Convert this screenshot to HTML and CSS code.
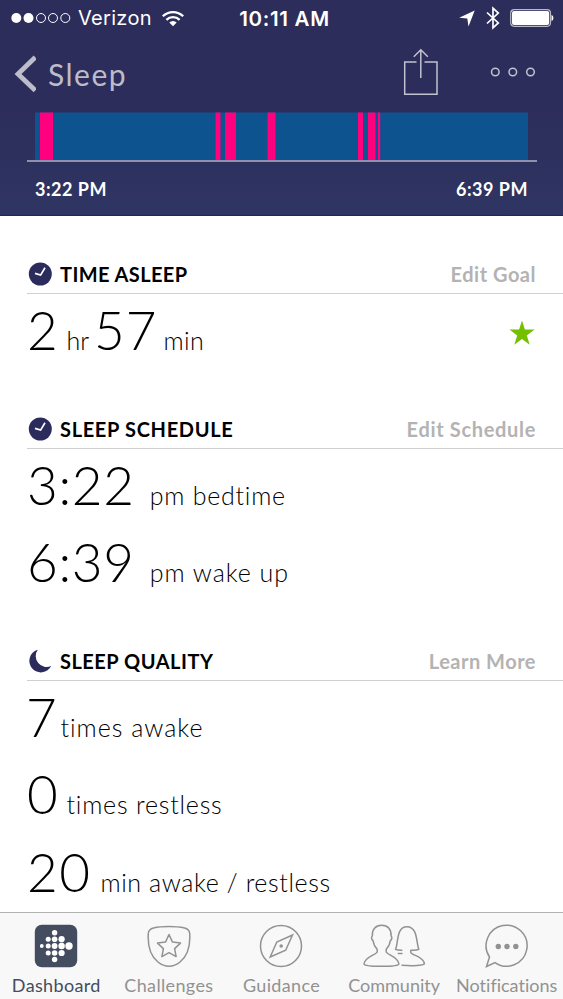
FILE: index.html
```html
<!DOCTYPE html>
<html lang="en">
<head>
<meta charset="utf-8">
<title>Sleep</title>
<link rel="stylesheet" href="styles.css">
</head>
<body>
<div class="app">
  <header class="top">
    <div class="status">
      <div class="carrier">
        <svg width="60" height="12" viewBox="0 0 60 12"><g fill="#fff"><circle cx="5.3" cy="6" r="5"/><circle cx="17.5" cy="6" r="5"/></g><g fill="none" stroke="#fff"><circle cx="30" cy="6" r="4.5"/><circle cx="42" cy="6" r="4.5"/><circle cx="54.3" cy="6" r="4.5"/></g></svg>
        <span class="name">Verizon</span>
        <svg width="22" height="17" viewBox="0 0 22 17"><g fill="none" stroke="#fff" stroke-width="2.3"><path d="M.8 6.3a14.5 14.5 0 0 1 20.4 0"/><path d="M4.4 9.9a9.4 9.4 0 0 1 13.2 0"/></g><path d="M11 16.3 7.3 12.6a5.2 5.2 0 0 1 7.4 0z" fill="#fff"/></svg>
      </div>
      <span class="clock">10:11 AM</span>
      <div class="radios">
        <svg width="16" height="17" viewBox="0 0 16 17"><path d="M15.7.5 9.5 16.5 8.3 8.5.2 7.7z" fill="#fff"/></svg>
        <svg width="14" height="24" viewBox="0 0 14 24"><path d="M1 6.5 12.3 17 7 21.8V2.2L12.3 7 1 17.5" fill="none" stroke="#fff" stroke-width="1.7"/></svg>
        <svg width="44" height="18" viewBox="0 0 44 18"><rect x=".7" y=".7" width="39.8" height="16.6" rx="3.5" fill="none" stroke="#b9b9ca" stroke-width="1.2"/><rect x="2" y="2" width="37.2" height="14" rx="2" fill="#fff"/><path d="M41.5 6c2.5.5 2.5 5.5 0 6z" fill="#fff"/></svg>
      </div>
    </div>
    <nav class="nav">
      <div class="back">
        <svg width="23" height="38" viewBox="0 0 23 38"><path d="M22.3 2.3 5 19 22.3 35.5" fill="none" stroke="#bcbccb" stroke-width="4.8"/></svg>
        <span class="title">Sleep</span>
      </div>
      <div class="actions">
        <svg width="36" height="48" viewBox="0 0 36 48"><path d="M13.5 14H1.7v32.3h32.3V14H21.5M17.8 30V2M10.8 8.800l7-7 7 7" fill="none" stroke="#c2c2d0" stroke-width="1.5"/></svg>
        <svg width="46" height="12" viewBox="0 0 46 12"><g fill="none" stroke="#c2c2d0" stroke-width="1.5"><circle cx="5.3" cy="6" r="3.8"/><circle cx="22.8" cy="6" r="3.8"/><circle cx="40.5" cy="6" r="3.8"/></g></svg>
      </div>
    </nav>
    <div class="chart">
      <svg width="493" height="48" viewBox="0 0 493 48"><path d="M0 .6h493V48H0z" fill="#0c538f"/><path d="M5 .6h13V48H5zM180.5.6h5V48h-5zM190 .6h11V48h-11zM232.5.6h8V48h-8zM323 .6h5V48h-5zM333 .6h7.500V48H333zM343 .6h2.200V48H343z" fill="#ff007f"/></svg>
    </div>
    <div class="range"><span>3:22 PM</span><span>6:39 PM</span></div>
  </header>

  <main>
    <section>
      <div class="head">
        <svg width="24" height="24" viewBox="0 0 24 24"><circle cx="12.3" cy="12" r="11.5" fill="#2c2c5c"/><path d="M7 11.4 12.6 13.1 17 5.8" fill="none" stroke="#fff" stroke-width="1.7"/></svg>
        <h2 class="h-time">TIME ASLEEP</h2><a class="l-goal">Edit Goal</a>
      </div>
      <div class="row"><b>2</b><span class="hr">hr</span><b class="n57">57</b><span class="min">min</span>
        <svg class="star" width="26" height="26" viewBox="0 0 26 26"><path d="m13 .5 2.900 9.100h9.700l-7.800 5.800 2.900 9.300L13 19l-7.700 5.700 2.900-9.300L.4 9.600h9.700z" fill="#73bf00"/></svg>
      </div>
    </section>
    <section>
      <div class="head">
        <svg width="24" height="24" viewBox="0 0 24 24"><circle cx="12.3" cy="12" r="11.5" fill="#2c2c5c"/><path d="M7 11.4 12.6 13.1 17 5.8" fill="none" stroke="#fff" stroke-width="1.7"/></svg>
        <h2 class="h-sched">SLEEP SCHEDULE</h2><a class="l-sched">Edit Schedule</a>
      </div>
      <div class="row"><b>3:22</b><span class="bed">pm bedtime</span></div>
      <div class="row"><b>6:39</b><span class="wake">pm wake up</span></div>
    </section>
    <section>
      <div class="head">
        <svg width="24" height="24" viewBox="0 0 24 24"><path d="M9.800.8A11.500 11.500 0 1 0 23.200 16.900 10.800 10.800 0 0 1 9.800.8z" fill="#2c2c5c"/></svg>
        <h2 class="h-qual">SLEEP QUALITY</h2><a class="l-more">Learn More</a>
      </div>
      <div class="row"><b class="n7">7</b><span class="awake">times awake</span></div>
      <div class="row"><b>0</b><span class="restless">times restless</span></div>
      <div class="row"><b class="n20">20</b><span class="both">min awake / restless</span></div>
    </section>
  </main>

  <footer class="tabs">
    <div class="tab on">
      <svg width="44" height="44" viewBox="0 0 44 44"><rect x=".8" y=".8" width="42.4" height="42.4" rx="7" fill="#434d5f"/><g fill="#fff"><circle cx="20.6" cy="8.7" r="2.7"/><circle cx="14.2" cy="15.2" r="2.5"/><circle cx="20.6" cy="15.2" r="2.8"/><circle cx="27.6" cy="15.2" r="3.1"/><circle cx="7.8" cy="22" r="1.9"/><circle cx="14.2" cy="22" r="2.5"/><circle cx="20.6" cy="22" r="2.9"/><circle cx="27.6" cy="22" r="3.2"/><circle cx="35" cy="22" r="3.7"/><circle cx="14.2" cy="29" r="2.5"/><circle cx="20.6" cy="29" r="2.8"/><circle cx="27.6" cy="29" r="3.1"/><circle cx="20.6" cy="35.5" r="2.7"/></g></svg>
      <span class="spaced">Dashboard</span>
    </div>
    <div class="tab">
      <svg width="44" height="44" viewBox="0 0 44 44"><g fill="none" stroke="#929292" stroke-width="1.5" stroke-linejoin="round"><path d="M22 2.500c6 0 11 .4 15.500 1.500 3 .7 5 2.700 5.200 5.500.8 12.500-2.200 22.500-9.700 28.500-3.500 3-7 4.300-11 4.300s-7.500-1.300-11-4.300C3.500 32 .5 22 1.300 9.500 1.500 6.700 3.500 4.700 6.500 4 11 2.900 16 2.500 22 2.500z"/><path d="m22 10.500 3.500 7.600 8 1-5.900 5.500 1.500 8-7.100-3.900-7.100 3.900 1.500-8-5.900-5.500 8-1z"/></g></svg>
      <span class="spaced">Challenges</span>
    </div>
    <div class="tab">
      <svg width="44" height="44" viewBox="0 0 44 44"><g fill="none" stroke="#929292" stroke-width="1.5"><circle cx="22" cy="22" r="20.5"/><path d="M33.5 11 17.8 18 11.2 33 26.7 26.3z"/></g><circle cx="22.2" cy="22" r="1.8" fill="#929292"/></svg>
      <span class="spaced">Guidance</span>
    </div>
    <div class="tab">
      <svg width="62" height="44" viewBox="0 0 62 44"><g fill="none" stroke="#929292" stroke-width="1.5" stroke-linejoin="round" stroke-linecap="round"><path d="M14.200 25.200C11.800 22.800 10.500 20 10 16.500c-1.800-.8-1.800-4-.6-4.700C8.800 5.500 12.500 1.200 18.700 1.200S28.600 5.500 28 11.800c1.200.7 1.200 3.900-.6 4.700-.5 3.500-1.800 6.300-4.200 8.700v2.800c1.500 3 11.700 4.800 12.700 11.800-.2 1.700-6 2.500-17.200 2.500S1.200 41.500 1 39.800c1-7 11.700-8.800 13.200-11.800z"/><path d="M39 29.500h-3.700M38.800 26.200c-2.200.1-4.400-.1-6.300-.8C35.500 19.500 33 2.700 44 2.700s9.200 16.800 11.800 22.700c-2 .9-5 1-8 .8v2.200c1 3 12.700 3.800 13.700 11.200-1.500 1.900-12 2.600-22.500 1.600"/></g></svg>
      <span>Community</span>
    </div>
    <div class="tab">
      <svg width="44" height="44" viewBox="0 0 44 44"><path d="M10 38.600A20.500 20.500 0 1 0 4.500 33L1.500 42.500z" fill="none" stroke="#929292" stroke-width="1.5"/><g fill="#929292"><circle cx="13.3" cy="22.5" r="2.7"/><circle cx="22" cy="22.5" r="2.7"/><circle cx="30.8" cy="22.5" r="2.7"/></g></svg>
      <span>Notifications</span>
    </div>
  </footer>
</div>
</body>
</html>
```
FILE: styles.css
```css
* { box-sizing: border-box; }
body { margin: 0; background: #fff; font-family: Lato, "Liberation Sans", sans-serif; font-variant-ligatures: none; color: #000; }
svg { display: block; flex: none; }
span, h2, a, b { white-space: nowrap; }
.app { width: 563px; height: 999px; display: flex; flex-direction: column; overflow: hidden; }

.top { height: 216px; flex: none; background: linear-gradient(#2c2d5a 0, #2c2d5a 110px, #2f3563 215px); border-bottom: 1px solid #20255a; color: #fff; }
.status { height: 36px; display: grid; grid-template-columns: 1fr auto 1fr; align-items: center; padding: 0 9px 0 11px; font-family: Inter, "Liberation Sans", sans-serif; font-size: 20px; }
.carrier, .radios { display: flex; align-items: center; }
.name { margin: 0 10px 0 7px; letter-spacing: .3px; }
.clock { font-size: 20.5px; font-weight: 600; letter-spacing: .7px; margin-left: 4px; }
.radios { justify-content: flex-end; gap: 10.5px; }

.nav { height: 76px; display: flex; justify-content: space-between; padding: 0 27px 0 13px; }
.back { display: flex; align-items: center; gap: 12px; }
.title { color: #bcbccb; font-size: 30px; letter-spacing: 1.5px; margin-top: -1px; }
.actions { display: flex; align-items: center; gap: 51px; padding-bottom: 4px; }
.chart { margin: 0 26.5px 0 27px; padding-left: 8px; border-bottom: 2px solid #8e90ae; height: 50px; }
.range { display: flex; justify-content: space-between; padding: 0 35px; line-height: 55px; font-size: 18px; font-weight: 700; letter-spacing: .5px; }

.head { height: 77.4px; margin-left: 27px; padding: 0 27px 7px 1px; border-bottom: 1px solid #d0d0d0; display: flex; align-items: flex-end; line-height: 24px; }
section:first-child .head { height: 78px; }
h2 { margin: 0 auto 0 8px; font-size: 20px; font-weight: 700; }
.head a { color: #b3b3b3; font-size: 20px; font-weight: 700; }
.h-time { letter-spacing: .4px; }
.h-sched, .l-sched { letter-spacing: .67px; }
.h-qual, .l-goal, .l-more { letter-spacing: .5px; }

.row { height: 77.4px; padding: 0 27px; display: flex; align-items: baseline; line-height: 72.5px; }
.row b { font-size: 53px; font-weight: 300; letter-spacing: .7px; }
.row span { font-size: 25px; font-weight: 300; margin-left: 8px; }
.row .n57 { margin-left: 5px; letter-spacing: 1px; }
.row .min { letter-spacing: .4px; margin-left: 6px; }
.row .bed { margin-left: 15px; letter-spacing: .75px; }
.row .wake { margin-left: 15px; letter-spacing: .95px; }
.row .n7 { margin-left: -1px; }
.row .awake { margin-left: 3px; letter-spacing: 1px; }
.row .restless { letter-spacing: .8px; }
.row .n20 { letter-spacing: 1.5px; }
.row .both { margin-left: 9px; letter-spacing: .6px; }
.star { margin: 26px 1px 0 auto; align-self: flex-start; }

main { height: 696px; flex: none; }
.tabs { height: 87px; flex: none; border-top: 1px solid #b2b2b2; background: #f8f8f8; display: grid; grid-template-columns: repeat(5, 1fr); color: #929292; font-size: 18px; }
.tab { display: flex; flex-direction: column; align-items: center; padding-top: 11px; line-height: 34px; }
.spaced { letter-spacing: .35px; }
.on { color: #434d5f; }
```
